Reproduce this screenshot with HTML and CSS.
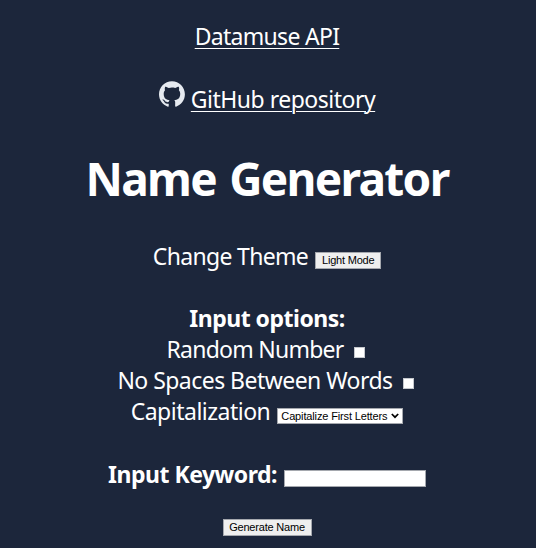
FILE: index.html
```html
<!DOCTYPE html>
<html lang="en">
<head>
<meta charset="utf-8">
<title>Name Generator</title>
<link rel="stylesheet" href="styles.css">
</head>
<body>
<main>
  <div class="row api"><a href="#">Datamuse API</a></div>
  <div class="row repo">
    <svg class="logo" viewBox="0 0 98 96" aria-hidden="true"><path fill-rule="evenodd" d="M48.854 0C21.839 0 0 22 0 49.217c0 21.756 13.993 40.172 33.405 46.69 2.427.49 3.316-1.059 3.316-2.362 0-1.141-.08-5.052-.08-9.127-13.59 2.934-16.42-5.867-16.42-5.867-2.184-5.704-5.42-7.17-5.42-7.17-4.448-3.015.324-3.015.324-3.015 4.934.326 7.523 5.052 7.523 5.052 4.367 7.496 11.404 5.378 14.235 4.074.404-3.178 1.699-5.378 3.074-6.6-10.839-1.141-22.243-5.378-22.243-24.283 0-5.378 1.94-9.778 5.014-13.2-.485-1.222-2.184-6.275.486-13.038 0 0 4.125-1.304 13.426 5.052a46.97 46.97 0 0 1 12.214-1.63c4.125 0 8.33.571 12.213 1.63 9.302-6.356 13.427-5.052 13.427-5.052 2.67 6.763.97 11.816.485 13.038 3.155 3.422 5.015 7.822 5.015 13.2 0 18.905-11.404 23.06-22.324 24.283 1.78 1.548 3.316 4.481 3.316 9.126 0 6.6-.08 11.897-.08 13.526 0 1.304.89 2.853 3.316 2.364 19.412-6.52 33.405-24.935 33.405-46.691C97.707 22 75.788 0 48.854 0z"/></svg>
    <a href="#">GitHub repository</a>
  </div>
  <h1>Name Generator</h1>
  <div class="row theme"><span>Change Theme</span><button type="button" class="light">Light Mode</button></div>
  <div class="row options"><b>Input options:</b></div>
  <label class="row random"><span>Random Number</span><input type="checkbox"></label>
  <label class="row spaces"><span>No Spaces Between Words</span><input type="checkbox"></label>
  <label class="row caps"><span>Capitalization</span>
    <span class="select"><span>Capitalize First Letters</span><svg viewBox="0 0 8 6" aria-hidden="true"><path d="M.8 1 4 4.2 7.2 1"/></svg></span>
  </label>
  <label class="row keyword"><b>Input Keyword:</b><input type="text"></label>
  <div class="row submit"><button type="button" class="generate">Generate Name</button></div>
</main>
</body>
</html>
```
FILE: styles.css
```css
* { box-sizing: border-box; }
body {
  margin: 0;
  height: 548px;
  overflow: hidden;
  background: #1c263b;
  color: #fff;
  font: 23px/31px "Noto Sans", "Open Sans", sans-serif;
}
main { display: flex; flex-direction: column; padding: 21px 2px 0 0; }
.row {
  display: flex;
  justify-content: center;
  height: 31px;
  white-space: nowrap;
}
a { color: inherit; text-decoration-thickness: 1px; text-underline-offset: 3px; }
.api { letter-spacing: -0.7px; }
.repo { margin-top: 32px; letter-spacing: -0.5px; }
.logo { width: 26px; height: 26px; margin: -3px 6px 0 0; fill: #e6eaf0; }
h1 {
  margin: 32px 0 0;
  height: 62px;
  font-size: 46px;
  line-height: 62px;
  text-align: center;
  letter-spacing: -1.7px;
  word-spacing: 3px;
}
.theme { margin-top: 32px; letter-spacing: -0.67px; }
.options { margin-top: 31px; letter-spacing: -0.5px; }
.random { padding-right: 3px; letter-spacing: -0.75px; }
.spaces { padding-right: 3px; letter-spacing: -0.54px; }
.caps { letter-spacing: -0.5px; }
.keyword { margin-top: 32px; letter-spacing: -0.5px; }
.submit { margin-top: 31px; }
button {
  height: 17px;
  padding: 0;
  border: 1px solid #a5a8ae;
  background: #efefef;
  color: #000;
  font: 11px/15px "Liberation Sans", Arial, sans-serif;
  letter-spacing: -0.2px;
}
.light { width: 66px; margin: 11px 0 0 7px; }
.generate { width: 89px; margin-top: -2px; }
input { appearance: none; margin: 0; background: #fff; border: 1px solid #a5a8ae; border-radius: 0; }
input[type="checkbox"] { width: 11px; height: 11px; margin: 13px 0 0 10px; border-color: #c5c8cd; }
input[type="text"] { width: 142px; height: 17px; margin: 11px 0 0 7px; }
.select {
  display: flex;
  align-items: center;
  justify-content: space-between;
  width: 126px;
  height: 16px;
  margin: 12px 0 0 7px;
  padding: 0 3px;
  border: 1px solid #a5a8ae;
  background: #fff;
  color: #000;
  font: 11px/14px "Liberation Sans", Arial, sans-serif;
  letter-spacing: -0.14px;
}
.select svg { width: 8px; height: 6px; fill: none; stroke: #000; stroke-width: 1.7; }
```
